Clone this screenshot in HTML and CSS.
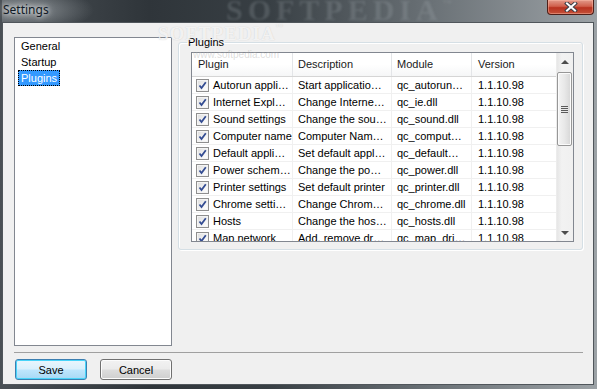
FILE: index.html
```html
<!DOCTYPE html>
<html lang="en">
<head>
  <meta charset="UTF-8">
  <meta name="viewport" content="width=device-width, initial-scale=1.0">
  <title>Settings</title>
  <link rel="stylesheet" href="styles.css">
</head>
<body>

  <div class="window">
    <div class="titlebar">
      <span class="title">Settings</span>
      <span class="wm-big">SOFTPEDIA<sup>™</sup></span>
      <button class="close-btn">
        <svg width="14" height="10" viewBox="0 0 14 10">
          <path d="M3 1.5 L11 8.5 M11 1.5 L3 8.5" stroke="#3b3f46" stroke-width="4" stroke-linecap="square"/>
          <path d="M3 1.5 L11 8.5 M11 1.5 L3 8.5" stroke="#ffffff" stroke-width="2" stroke-linecap="square"/>
        </svg>
      </button>
    </div>

    <div class="client">
      <span class="wm-small">SOFTPEDIA<sup>™</sup></span>
      <span class="wm-url">www.softpedia.com</span>

      <div class="main">
        <ul class="listbox">
          <li><span>General</span></li>
          <li><span>Startup</span></li>
          <li><span class="selected">Plugins</span></li>
        </ul>

        <fieldset class="group">
          <legend>Plugins</legend>
          <div class="listview">
            <div class="lv-body">
              <div class="lv-row lv-header">
                <div class="col c1">Plugin</div>
                <div class="col c2">Description</div>
                <div class="col c3">Module</div>
                <div class="col c4">Version</div>
              </div>

              <div class="lv-row">
                <div class="col c1"><i class="check"></i>Autorun appli…</div>
                <div class="col c2">Start applicatio…</div>
                <div class="col c3">qc_autorun…</div>
                <div class="col c4">1.1.10.98</div>
              </div>
              <div class="lv-row">
                <div class="col c1"><i class="check"></i>Internet Expl…</div>
                <div class="col c2">Change Interne…</div>
                <div class="col c3">qc_ie.dll</div>
                <div class="col c4">1.1.10.98</div>
              </div>
              <div class="lv-row">
                <div class="col c1"><i class="check"></i>Sound settings</div>
                <div class="col c2">Change the sou…</div>
                <div class="col c3">qc_sound.dll</div>
                <div class="col c4">1.1.10.98</div>
              </div>
              <div class="lv-row">
                <div class="col c1"><i class="check"></i>Computer name</div>
                <div class="col c2">Computer Nam…</div>
                <div class="col c3">qc_comput…</div>
                <div class="col c4">1.1.10.98</div>
              </div>
              <div class="lv-row">
                <div class="col c1"><i class="check"></i>Default appli…</div>
                <div class="col c2">Set default appl…</div>
                <div class="col c3">qc_default…</div>
                <div class="col c4">1.1.10.98</div>
              </div>
              <div class="lv-row">
                <div class="col c1"><i class="check"></i>Power schem…</div>
                <div class="col c2">Change the po…</div>
                <div class="col c3">qc_power.dll</div>
                <div class="col c4">1.1.10.98</div>
              </div>
              <div class="lv-row">
                <div class="col c1"><i class="check"></i>Printer settings</div>
                <div class="col c2">Set default printer</div>
                <div class="col c3">qc_printer.dll</div>
                <div class="col c4">1.1.10.98</div>
              </div>
              <div class="lv-row">
                <div class="col c1"><i class="check"></i>Chrome setti…</div>
                <div class="col c2">Change Chrom…</div>
                <div class="col c3">qc_chrome.dll</div>
                <div class="col c4">1.1.10.98</div>
              </div>
              <div class="lv-row">
                <div class="col c1"><i class="check"></i>Hosts</div>
                <div class="col c2">Change the hos…</div>
                <div class="col c3">qc_hosts.dll</div>
                <div class="col c4">1.1.10.98</div>
              </div>
              <div class="lv-row">
                <div class="col c1"><i class="check"></i>Map network</div>
                <div class="col c2">Add, remove dr…</div>
                <div class="col c3">qc_map_dri…</div>
                <div class="col c4">1.1.10.98</div>
              </div>
            </div>

            <div class="scrollbar">
              <div class="sb-btn"><i class="arrow-up"></i></div>
              <div class="sb-thumb"><i class="grip"></i></div>
              <div class="sb-track"></div>
              <div class="sb-btn"><i class="arrow-down"></i></div>
            </div>
          </div>
        </fieldset>
      </div>

      <div class="separator"></div>

      <div class="buttons">
        <button class="btn btn-default">Save</button>
        <button class="btn">Cancel</button>
      </div>
    </div>
  </div>

</body>
</html>
```

FILE: styles.css
```css
* {
  box-sizing: border-box;
  margin: 0;
  padding: 0;
}

body {
  width: 597px;
  height: 389px;
  overflow: hidden;
  font-family: "Liberation Sans", Arial, sans-serif;
  font-size: 11px;
  color: #000;
  background: linear-gradient(90deg, #4a5055 0%, #2f353a 25%, #383f44 45%, #6a7176 72%, #9ca2a6 100%);
}

.window {
  height: 389px;
  display: flex;
  flex-direction: column;
  padding: 0 3px 4px 2px;
}

/* title bar */
.titlebar {
  height: 22px;
  position: relative;
  display: flex;
  justify-content: space-between;
  align-items: flex-start;
  background: radial-gradient(ellipse 70px 22px at 22px 10px, rgba(200, 206, 210, 0.55), rgba(200, 206, 210, 0) 100%);
}

.title {
  font-family: "Noto Sans", "Liberation Sans", sans-serif;
  font-size: 12px;
  line-height: 20px;
  margin-left: 1px;
  color: #111a26;
  text-shadow: 0 0 5px rgba(255, 255, 255, 0.9), 0 0 9px rgba(255, 255, 255, 0.6);
}

.wm-big {
  position: absolute;
  left: 224px;
  top: -1px;
  font-family: "Liberation Serif", serif;
  font-weight: bold;
  font-size: 30px;
  line-height: 22px;
  letter-spacing: 5px;
  color: rgba(175, 182, 188, 0.22);
  filter: blur(0.8px);
}

.wm-big sup {
  font-size: 9px;
  vertical-align: top;
  line-height: 9px;
}

.close-btn {
  width: 47px;
  height: 15px;
  border: 1px solid #4f1f18;
  border-top: none;
  border-radius: 0 0 4px 4px;
  background: linear-gradient(180deg, #e29a8a 0%, #d0604c 45%, #b8321f 55%, #c4523a 100%);
  box-shadow: inset 0 0 0 1px rgba(255, 190, 170, 0.45);
  display: flex;
  align-items: center;
  justify-content: center;
}

/* client area */
.client {
  flex: 1;
  position: relative;
  background: #f0f0f0;
  border: 1px solid #50565b;
  padding: 14px 10px 0 11px;
}

.wm-small {
  position: absolute;
  left: 155px;
  top: 1px;
  font-family: "Liberation Serif", serif;
  font-weight: bold;
  font-size: 19px;
  line-height: 19px;
  letter-spacing: 1px;
  color: rgba(255, 255, 255, 0.75);
  text-shadow: 0 0 1px rgba(150, 150, 150, 0.45);
  z-index: 2;
}

.wm-small sup {
  font-size: 7px;
  vertical-align: top;
  line-height: 7px;
}

.wm-url {
  position: absolute;
  left: 190px;
  top: 27px;
  font-size: 10px;
  line-height: 10px;
  color: rgba(170, 170, 170, 0.4);
  z-index: 2;
}

.main {
  display: flex;
  gap: 6px;
  height: 309px;
}

.listbox {
  width: 158px;
  height: 309px;
  list-style: none;
  background: #fff;
  border: 1px solid #828790;
  padding: 0 0 0 4px;
}

.listbox li {
  height: 16px;
  line-height: 16px;
}

.listbox li span {
  display: inline-block;
  padding: 0 2px;
  line-height: 14px;
  border: 1px solid transparent;
  margin-left: -1px;
}

.listbox .selected {
  background: #3399ff;
  color: #fff;
  border: 1px dotted #000;
}

/* group box */
.group {
  flex: 1;
  min-width: 0;
  align-self: flex-start;
  margin-top: -1px;
  border: 1px solid #d5dfe5;
  border-radius: 3px;
  box-shadow: inset 1px 1px 0 #fff, 1px 1px 0 #fff;
  padding: 3px 8px 7px 12px;
}

.group legend {
  line-height: 13px;
  padding: 0 1px;
  margin-left: -4px;
}

.listview {
  display: flex;
  height: 190px;
  border: 1px solid #828790;
  background: #fff;
}

.lv-body {
  flex: 1;
  overflow: hidden;
}

.lv-row {
  display: flex;
  height: 17px;
  border-bottom: 1px solid #f0f0f0;
}

.col {
  white-space: nowrap;
  overflow: hidden;
  line-height: 16px;
  padding-left: 5px;
  border-right: 1px solid #f0f0f0;
  display: flex;
  align-items: center;
}

.c1 { width: 101px; padding-left: 4px; }
.c2 { width: 99px; }
.c3 { width: 80px; }
.c4 { width: 84px; padding-left: 6px; border-right: none; }

.lv-header {
  height: 24px;
  border-bottom: 1px solid #d5d5d5;
  background: linear-gradient(180deg, #ffffff 0%, #ffffff 50%, #f5f6f7 100%);
}

.lv-header .col {
  line-height: 23px;
  border-right: 1px solid #e3e5e8;
  color: #1a1a1a;
}

.lv-header .c1 { padding-left: 6px; }
.lv-header .c4 { border-right: none; }

.check {
  flex: none;
  width: 13px;
  height: 13px;
  margin-right: 4px;
  border: 1px solid #8f8f8f;
  background:
    url("data:image/svg+xml,%3Csvg xmlns='http://www.w3.org/2000/svg' width='11' height='11'%3E%3Cpath d='M2.5 5.5 L4.5 8 L8.8 2.2' fill='none' stroke='%23334c92' stroke-width='1.8'/%3E%3C/svg%3E") center no-repeat,
    linear-gradient(135deg, #dcdcdc 0%, #f4f4f4 60%, #ffffff 100%);
  box-shadow: inset 0 0 0 1px #f4f4f4;
}

/* scrollbar */
.scrollbar {
  width: 17px;
  display: flex;
  flex-direction: column;
  background: linear-gradient(90deg, #e6e6e6 0%, #f2f2f2 30%, #f0f0f0 100%);
  border-left: 1px solid #ececec;
}

.sb-btn {
  height: 17px;
  display: flex;
  align-items: center;
  justify-content: center;
}

.arrow-up {
  width: 0;
  height: 0;
  border-left: 4px solid transparent;
  border-right: 4px solid transparent;
  border-bottom: 4px solid #4d4d4d;
}

.arrow-down {
  width: 0;
  height: 0;
  border-left: 4px solid transparent;
  border-right: 4px solid transparent;
  border-top: 4px solid #4d4d4d;
}

.sb-thumb {
  height: 74px;
  margin: 2px 1px 0 0;
  border: 1px solid #979797;
  border-radius: 2px;
  background: linear-gradient(90deg, #f4f4f4 0%, #e8e8e8 50%, #d6d6d6 100%);
  box-shadow: inset 0 0 0 1px #fbfbfb;
  display: flex;
  align-items: center;
  justify-content: center;
}

.grip {
  width: 7px;
  height: 7px;
  background: repeating-linear-gradient(180deg, #5a5a5a 0px, #5a5a5a 1px, #e8e8e8 1px, #e8e8e8 2px);
}

.sb-track {
  flex: 1;
}

/* bottom */
.separator {
  height: 1px;
  margin-top: 6px;
  background: #a0a0a0;
}

.buttons {
  display: flex;
  gap: 13px;
  margin-top: 6px;
  padding-left: 1px;
}

.btn {
  width: 72px;
  height: 21px;
  font-family: "Liberation Sans", Arial, sans-serif;
  font-size: 11px;
  color: #000;
  border: 1px solid #707070;
  border-radius: 3px;
  background: linear-gradient(180deg, #f2f2f2 0%, #ebebeb 48%, #dddddd 52%, #cfcfcf 100%);
  box-shadow: inset 0 0 0 1px #fcfcfc;
}

.btn-default {
  border-color: #3c7fb1;
  background: linear-gradient(180deg, #eaf6fd 0%, #d9f0fc 48%, #bee6fd 52%, #a7d9f5 100%);
  box-shadow: inset 0 0 0 1px #48d4f9;
}
```
